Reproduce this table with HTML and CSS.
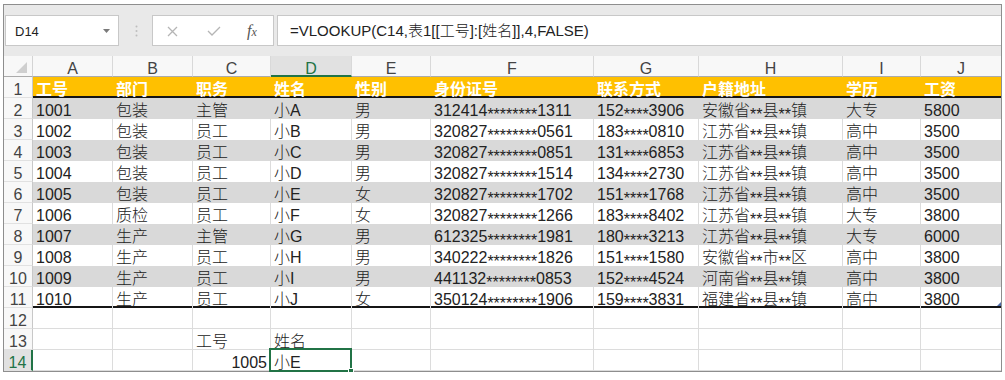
FILE: index.html
```html
<!DOCTYPE html>
<html lang="zh-CN">
<head>
<meta charset="utf-8">
<title>VLOOKUP</title>
<link rel="stylesheet" href="styles.css">
</head>
<body>
<div class="window">
  <div class="fbar">
    <div class="namebox">
      <span class="ref">D14</span>
      <svg class="dd" width="7" height="4" viewBox="0 0 7 4"><path d="M0 0H7L3.5 4Z" fill="#7a7a7a"/></svg>
    </div>
    <svg class="grip" width="3" height="12" viewBox="0 0 3 12"><circle cx="1.5" cy="1.5" r="1" fill="#bdbdbd"/><circle cx="1.5" cy="6" r="1" fill="#bdbdbd"/><circle cx="1.5" cy="10.5" r="1" fill="#bdbdbd"/></svg>
    <div class="fxbox">
      <svg class="ico-x" width="11" height="11" viewBox="0 0 11 11"><path d="M1 1L10 10M10 1L1 10" stroke="#b5b5b5" stroke-width="1.3" fill="none"/></svg>
      <svg class="ico-ok" width="14" height="10" viewBox="0 0 14 10"><path d="M1 5L5 9L13 1" stroke="#b5b5b5" stroke-width="1.3" fill="none"/></svg>
      <span class="fx"><span class="fx-f">f</span><span class="fx-x">x</span></span>
    </div>
    <div class="formula">=VLOOKUP(C14,表1[[工号]:[姓名]],4,FALSE)</div>
  </div>

  <div class="sheet">
    <div class="row colhdr">
      <div class="corner"><svg width="12" height="12" viewBox="0 0 12 12"><path d="M11 0V11H0Z" fill="#cfcfcf"/></svg></div>
      <div class="ch">A</div><div class="ch">B</div><div class="ch">C</div><div class="ch sel">D</div><div class="ch">E</div><div class="ch">F</div><div class="ch">G</div><div class="ch">H</div><div class="ch">I</div><div class="ch">J</div>
    </div>

    <div class="row thead">
      <div class="rh">1</div>
      <div class="c">工号</div><div class="c">部门</div><div class="c">职务</div><div class="c">姓名</div><div class="c">性别</div><div class="c">身份证号</div><div class="c">联系方式</div><div class="c">户籍地址</div><div class="c">学历</div><div class="c">工资</div>
    </div>

    <div class="row band">
      <div class="rh">2</div>
      <div class="c">1001</div><div class="c">包装</div><div class="c">主管</div><div class="c">小A</div><div class="c">男</div><div class="c">312414<span class="m">********</span>1311</div><div class="c">152<span class="m">****</span>3906</div><div class="c">安徽省<span class="m">**</span>县<span class="m">**</span>镇</div><div class="c">大专</div><div class="c">5800</div>
    </div>
    <div class="row plain">
      <div class="rh">3</div>
      <div class="c">1002</div><div class="c">包装</div><div class="c">员工</div><div class="c">小B</div><div class="c">男</div><div class="c">320827<span class="m">********</span>0561</div><div class="c">183<span class="m">****</span>0810</div><div class="c">江苏省<span class="m">**</span>县<span class="m">**</span>镇</div><div class="c">高中</div><div class="c">3500</div>
    </div>
    <div class="row band">
      <div class="rh">4</div>
      <div class="c">1003</div><div class="c">包装</div><div class="c">员工</div><div class="c">小C</div><div class="c">男</div><div class="c">320827<span class="m">********</span>0851</div><div class="c">131<span class="m">****</span>6853</div><div class="c">江苏省<span class="m">**</span>县<span class="m">**</span>镇</div><div class="c">高中</div><div class="c">3500</div>
    </div>
    <div class="row plain">
      <div class="rh">5</div>
      <div class="c">1004</div><div class="c">包装</div><div class="c">员工</div><div class="c">小D</div><div class="c">男</div><div class="c">320827<span class="m">********</span>1514</div><div class="c">134<span class="m">****</span>2730</div><div class="c">江苏省<span class="m">**</span>县<span class="m">**</span>镇</div><div class="c">高中</div><div class="c">3500</div>
    </div>
    <div class="row band">
      <div class="rh">6</div>
      <div class="c">1005</div><div class="c">包装</div><div class="c">员工</div><div class="c">小E</div><div class="c">女</div><div class="c">320827<span class="m">********</span>1702</div><div class="c">151<span class="m">****</span>1768</div><div class="c">江苏省<span class="m">**</span>县<span class="m">**</span>镇</div><div class="c">高中</div><div class="c">3500</div>
    </div>
    <div class="row plain">
      <div class="rh">7</div>
      <div class="c">1006</div><div class="c">质检</div><div class="c">员工</div><div class="c">小F</div><div class="c">女</div><div class="c">320827<span class="m">********</span>1266</div><div class="c">183<span class="m">****</span>8402</div><div class="c">江苏省<span class="m">**</span>县<span class="m">**</span>镇</div><div class="c">大专</div><div class="c">3800</div>
    </div>
    <div class="row band">
      <div class="rh">8</div>
      <div class="c">1007</div><div class="c">生产</div><div class="c">主管</div><div class="c">小G</div><div class="c">男</div><div class="c">612325<span class="m">********</span>1981</div><div class="c">180<span class="m">****</span>3213</div><div class="c">江苏省<span class="m">**</span>县<span class="m">**</span>镇</div><div class="c">大专</div><div class="c">6000</div>
    </div>
    <div class="row plain">
      <div class="rh">9</div>
      <div class="c">1008</div><div class="c">生产</div><div class="c">员工</div><div class="c">小H</div><div class="c">男</div><div class="c">340222<span class="m">********</span>1826</div><div class="c">151<span class="m">****</span>1580</div><div class="c">安徽省<span class="m">**</span>市<span class="m">**</span>区</div><div class="c">高中</div><div class="c">3800</div>
    </div>
    <div class="row band">
      <div class="rh">10</div>
      <div class="c">1009</div><div class="c">生产</div><div class="c">员工</div><div class="c">小I</div><div class="c">男</div><div class="c">441132<span class="m">********</span>0853</div><div class="c">152<span class="m">****</span>4524</div><div class="c">河南省<span class="m">**</span>县<span class="m">**</span>镇</div><div class="c">高中</div><div class="c">3800</div>
    </div>
    <div class="row plain last">
      <div class="rh">11</div>
      <div class="c">1010</div><div class="c">生产</div><div class="c">员工</div><div class="c">小J</div><div class="c">女</div><div class="c">350124<span class="m">********</span>1906</div><div class="c">159<span class="m">****</span>3831</div><div class="c">福建省<span class="m">**</span>县<span class="m">**</span>镇</div><div class="c">高中</div><div class="c resize">3800<span class="rs-handle"></span></div>
    </div>

    <div class="row empty">
      <div class="rh">12</div>
      <div class="c"></div><div class="c"></div><div class="c"></div><div class="c"></div><div class="c"></div><div class="c"></div><div class="c"></div><div class="c"></div><div class="c"></div><div class="c"></div>
    </div>
    <div class="row empty">
      <div class="rh">13</div>
      <div class="c"></div><div class="c"></div><div class="c">工号</div><div class="c">姓名</div><div class="c"></div><div class="c"></div><div class="c"></div><div class="c"></div><div class="c"></div><div class="c"></div>
    </div>
    <div class="row empty">
      <div class="rh sel">14</div>
      <div class="c"></div><div class="c"></div><div class="c num">1005</div><div class="c active">小E<span class="selbox"><span class="handle"></span></span></div><div class="c"></div><div class="c"></div><div class="c"></div><div class="c"></div><div class="c"></div><div class="c"></div>
    </div>
  </div>
</div>
</body>
</html>
```

FILE: styles.css
```css
* { box-sizing: border-box; }

body {
  margin: 0;
  background: #ffffff;
  font-family: "Liberation Sans", "Noto Sans CJK SC", sans-serif;
}

.window {
  margin: 4px 0 0 3px;
  width: 999px;
  border: 1px solid #8e8e8e;
  background: #e9e9e9;
}

/* ---------- formula bar ---------- */
.fbar {
  display: flex;
  align-items: center;
  height: 51px;
  padding: 10px 0 10px 1px;
}

.namebox {
  width: 114px;
  height: 31px;
  background: #fff;
  border: 1px solid #c8c8c8;
  display: flex;
  align-items: center;
  justify-content: space-between;
  padding: 1px 8px 0 9px;
  font-size: 13px;
  color: #222;
}

.grip {
  margin-left: 16px;
}

.fxbox {
  margin-left: 14px;
  width: 122px;
  height: 31px;
  background: #fff;
  border: 1px solid #c8c8c8;
  display: flex;
  align-items: center;
  padding: 1px 0 0 14px;
}

.ico-ok { margin-left: 29px; }

.fx {
  margin-left: 26px;
  font-family: "Liberation Serif", serif;
  font-style: italic;
  color: #555;
  display: flex;
  align-items: baseline;
}
.fx-f { font-size: 16px; }
.fx-x { font-size: 12px; }

.formula {
  margin-left: 3px;
  flex: 1;
  height: 31px;
  background: #fff;
  border: 1px solid #c8c8c8;
  border-right: none;
  padding-left: 12px;
  font-size: 15px;
  font-weight: 300;
  line-height: 29px;
  color: #222;
  white-space: nowrap;
}

/* ---------- sheet ---------- */
.row {
  display: grid;
  grid-template-columns: 29px 80px 80px 78px 81px 79px 163px 105px 144px 78px 80px;
  height: 21px;
  font-size: 16px;
}

.row > div {
  height: 21px;
  line-height: 17px;
  padding-top: 4px;
  white-space: nowrap;
}

.colhdr { background: #f8f8f8; }

.row > .corner {
  border-right: 1px solid #d4d4d4;
  border-bottom: 1px solid #ababab;
  display: flex;
  justify-content: flex-end;
  align-items: flex-end;
  padding: 0 4px 2px 0;
}

.ch {
  text-align: center;
  color: #444;
  border-right: 1px solid #d9d9d9;
  border-bottom: 1px solid #ababab;
}
.ch:last-child { border-right: none; }
.ch.sel {
  background: #e1e1e1;
  color: #217346;
  border-bottom: 2px solid #217346;
}

.rh {
  background: #f8f8f8;
  text-align: center;
  color: #444;
  border-right: 1px solid #c8c8c8;
  border-bottom: 1px solid #e1e1e1;
}
.rh.sel {
  background: #e1e1e1;
  color: #217346;
  border-right: 2px solid #217346;
}

.c {
  padding-left: 3px;
  color: #222;
  background: #fff;
  font-weight: 300;
}

.m {
  vertical-align: -4px;
  line-height: 10px;
}

.thead .c {
  background: #ffc000;
  color: #fff;
  font-weight: bold;
  box-shadow: inset 0 -2px 0 #151515;
}

.band .c { background: #d9d9d9; }

.plain .c { border-right: 1px solid #dcdcdc; }
.plain .c:last-child { border-right: none; }

.last .c { box-shadow: inset 0 -2px 0 #151515; }

.empty .c {
  border-right: 1px solid #dcdcdc;
  border-bottom: 1px solid #dcdcdc;
}
.empty .c:last-child { border-right: none; }

.c.num {
  text-align: right;
  padding-right: 3px;
}

.c.active,
.c.resize { position: relative; }

.selbox {
  position: absolute;
  left: -2px;
  top: -2px;
  right: -1px;
  bottom: -2px;
  border: 2px solid #217346;
}

.handle {
  position: absolute;
  right: -4px;
  bottom: -4px;
  width: 6px;
  height: 6px;
  background: #217346;
  border: 1px solid #fff;
}

.rs-handle {
  position: absolute;
  right: 0;
  bottom: 2px;
  width: 0;
  height: 0;
  border-left: 4px solid transparent;
  border-bottom: 4px solid #4e6aa8;
}
```
